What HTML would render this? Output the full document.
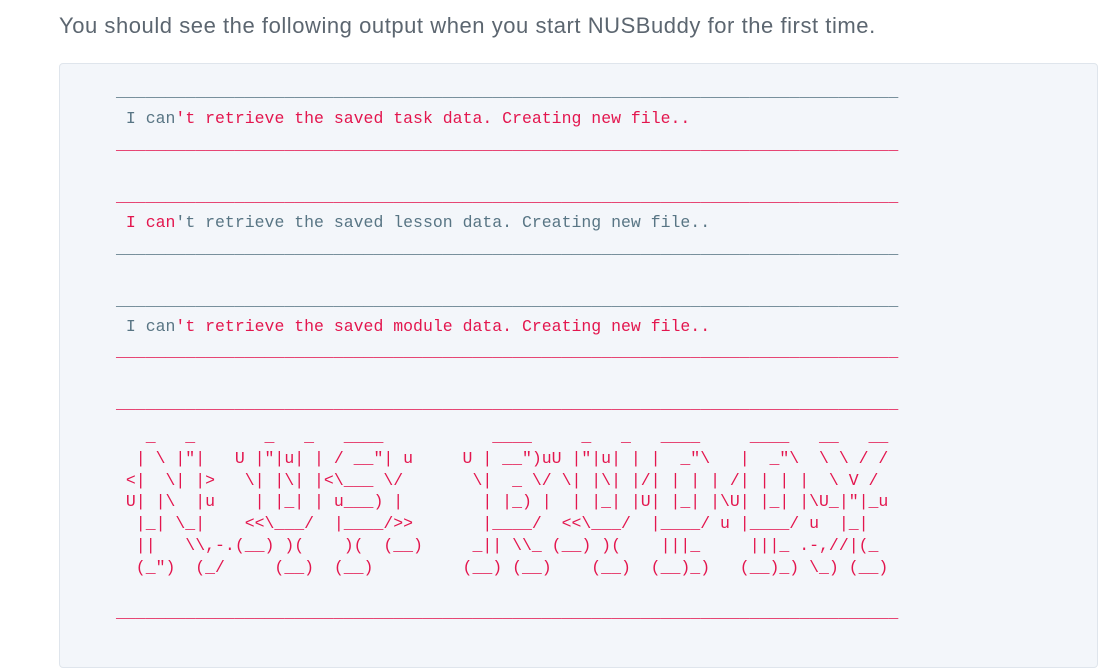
<!DOCTYPE html>
<html><head><meta charset="utf-8"><style>
html,body{margin:0;padding:0;background:#fff;width:1106px;height:671px;overflow:hidden}
h{position:absolute;left:59px;top:13px;font:22px "Liberation Sans",sans-serif;letter-spacing:0.55px;color:#5c6670;white-space:nowrap}
.box{position:absolute;left:59px;top:63px;width:1037px;height:603px;background:#f3f6fa;border:1px solid #dfe5ec;border-radius:4px}
.l{position:absolute;left:116px;font:16.5px/22px "Liberation Mono",monospace;white-space:pre;margin:0}
.r{color:#e3164e}.g{color:#587584}
</style></head><body>
<h>You should see the following output when you start NUSBuddy for the first time.</h>
<div class="box"></div>
<div class="l g" style="top:81px">_______________________________________________________________________________</div>
<div class="l" style="top:108px"><span class="g"> I can</span><span class="r">'t retrieve the saved task data. Creating new file..</span></div>
<div class="l r" style="top:134px">_______________________________________________________________________________</div>
<div class="l r" style="top:186px">_______________________________________________________________________________</div>
<div class="l" style="top:212px"><span class="r"> I can</span><span class="g">'t retrieve the saved lesson data. Creating new file..</span></div>
<div class="l g" style="top:238px">_______________________________________________________________________________</div>
<div class="l g" style="top:290px">_______________________________________________________________________________</div>
<div class="l" style="top:316px"><span class="g"> I can</span><span class="r">'t retrieve the saved module data. Creating new file..</span></div>
<div class="l r" style="top:341px">_______________________________________________________________________________</div>
<div class="l r" style="top:393px">_______________________________________________________________________________</div>
<pre class="l r" style="top:426px;line-height:21.8px">   _   _       _   _   ____           ____     _   _   ____     ____   __   __
  | \ |"|   U |"|u| | / __"| u     U | __")uU |"|u| | |  _"\   |  _"\  \ \ / /
 <|  \| |>   \| |\| |<\___ \/       \|  _ \/ \| |\| |/| | | | /| | | |  \ V /
 U| |\  |u    | |_| | u___) |        | |_) |  | |_| |U| |_| |\U| |_| |\U_|"|_u
  |_| \_|    <<\___/  |____/>>       |____/  <<\___/  |____/ u |____/ u  |_|
  ||   \\,-.(__) )(    )(  (__)     _|| \\_ (__) )(    |||_     |||_ .-,//|(_
  (_")  (_/     (__)  (__)         (__) (__)    (__)  (__)_)   (__)_) \_) (__)</pre>
<div class="l r" style="top:602px">_______________________________________________________________________________</div>
</body></html>
